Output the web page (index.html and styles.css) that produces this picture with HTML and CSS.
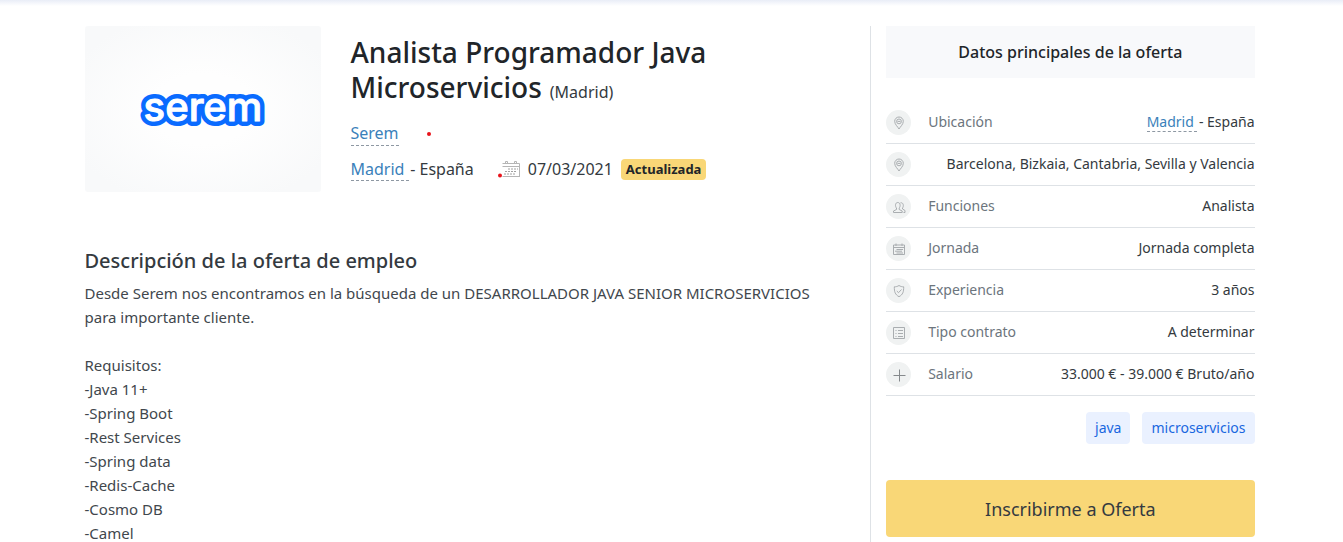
FILE: index.html
```html
<!DOCTYPE html>
<html lang="es">
<head>
<meta charset="utf-8">
<meta name="viewport" content="width=device-width, initial-scale=1">
<title>Analista Programador Java Microservicios</title>
<link rel="stylesheet" href="styles.css">
</head>
<body>
<svg class="defs" aria-hidden="true">
  <symbol id="pin" viewBox="0 0 14 14"><path d="M7 13C6 11 2.700 8.500 2.700 5.300a4.300 4.300 0 0 1 8.600 0C11.300 8.500 8 11 7 13z"/><circle cx="7" cy="5.400" r="2.400"/><path d="M5.500 5.400h3"/></symbol>
  <symbol id="users" viewBox="0 0 14 14"><path d="M1.500 12.500v-1.500l3-1.500V8C3 6.500 3 2.500 5.800 2.500S8.600 6.500 7.200 8v1.500l3 1.500v1.500z"/><path d="M8.500 2.800c3-.6 3.500 3.500 2 5.200v1l2.500 1.500v2h-1.500"/></symbol>
  <symbol id="calendar" viewBox="0 0 14 14"><path d="M1.500 3h11v9.500h-11zM1.500 5.500h11M4 1.500v2.500M10 1.500v2.500M4.500 7.500H11M3 9.200h7M4.500 11H11"/></symbol>
  <symbol id="shield" viewBox="0 0 14 14"><path d="M7 1.500c1.500 1 3 1.300 4.700 1.300 0 5-.7 7.700-4.700 9.900-4-2.200-4.700-4.900-4.700-9.900C4 2.800 5.500 2.500 7 1.500zM4.800 7l1.700 1.700L9.500 5.500"/></symbol>
  <symbol id="list" viewBox="0 0 14 14"><path d="M1.500 1.500h11v11h-11zM3.500 4.500h1M6 4.500h5M3.500 7.500h1M6 7.500h5M3.500 10.500h1M6 10.500h5"/></symbol>
  <symbol id="plus" viewBox="0 0 14 14"><path d="M7.500 1.500v12M1.500 7.500h12"/></symbol>
</svg>
<main class="container">
  <article class="offer">
    <header class="offer-head">
      <div class="logo-box">
        <svg class="logo" viewBox="0 0 130 40" role="img" aria-label="serem">
          <text class="logo-text" x="65" y="32">serem</text>
          <text class="logo-text logo-fill" x="65" y="32" aria-hidden="true">serem</text>
        </svg>
      </div>
      <div class="offer-info">
        <h1 class="title"><span>Analista Programador Java</span> <span>Microservicios</span><small class="title-city">(Madrid)</small></h1>
        <p class="company"><a class="link" href="#serem">Serem</a><span class="dot"></span></p>
        <p class="meta">
          <span><a class="link" href="#madrid">Madrid&nbsp;</a>&#8202;- España</span>
          <svg class="date-icon" viewBox="0 0 22 18" aria-hidden="true">
            <path class="date-frame" d="M4.500 3.500h17v13h-17M4.500 6.500h17M7.500 3.500V1.500h2v2M16.500 3.500V1.500h2v2M21.500 4v13"/>
            <path class="date-days" d="M10 9h10M7 11.500h12M6 14h11"/>
            <circle class="date-dot" cx="2" cy="15.500" r="2"/>
          </svg>
          <time datetime="2021-03-07">07/03/2021</time>
          <span class="badge">Actualizada</span>
        </p>
      </div>
    </header>
    <section>
      <h2 class="subtitle">Descripción de la oferta de empleo</h2>
      <p class="description">Desde Serem nos encontramos en la búsqueda de un DESARROLLADOR JAVA SENIOR MICROSERVICIOS para importante cliente.<br><br>Requisitos:<br>-Java 11+<br>-Spring Boot<br>-Rest Services<br>-Spring data<br>-Redis-Cache<br>-Cosmo DB<br>-Camel</p>
    </section>
  </article>
  <aside class="side">
    <h2 class="side-title">Datos principales de la oferta</h2>
    <ul class="facts">
      <li class="fact"><span class="fact-icon"><svg class="icon"><use href="#pin"/></svg></span><span class="fact-name">Ubicación</span><span class="fact-value"><a class="link" href="#madrid">Madrid&nbsp;</a>&#8202;- España</span></li>
      <li class="fact"><span class="fact-icon"><svg class="icon"><use href="#pin"/></svg></span><span class="fact-value">Barcelona, Bizkaia, Cantabria, Sevilla y Valencia</span></li>
      <li class="fact"><span class="fact-icon"><svg class="icon"><use href="#users"/></svg></span><span class="fact-name">Funciones</span><span class="fact-value">Analista</span></li>
      <li class="fact"><span class="fact-icon"><svg class="icon"><use href="#calendar"/></svg></span><span class="fact-name">Jornada</span><span class="fact-value">Jornada completa</span></li>
      <li class="fact"><span class="fact-icon"><svg class="icon"><use href="#shield"/></svg></span><span class="fact-name">Experiencia</span><span class="fact-value">3 años</span></li>
      <li class="fact"><span class="fact-icon"><svg class="icon"><use href="#list"/></svg></span><span class="fact-name">Tipo contrato</span><span class="fact-value">A determinar</span></li>
      <li class="fact"><span class="fact-icon"><svg class="icon icon-strong"><use href="#plus"/></svg></span><span class="fact-name">Salario</span><span class="fact-value">33.000 € - 39.000 € Bruto/año</span></li>
    </ul>
    <div class="tags"><a class="tag" href="#java">java</a><a class="tag" href="#microservicios">microservicios</a></div>
    <button class="apply" type="button">Inscribirme a Oferta</button>
  </aside>
</main>
</body>
</html>
```
FILE: styles.css
```css
* { box-sizing: border-box; }
body {
  margin: 0;
  overflow: hidden;
  font-family: "Segoe UI", "Noto Sans", sans-serif;
  font-size: 15px;
  line-height: 24px;
  color: #343a40;
  background: linear-gradient(#e9edf7, #fff 6px) no-repeat #fff;
}
h1, h2, p, ul { margin: 0; padding: 0; }
.defs { display: none; }
.container {
  display: grid;
  grid-template-columns: 2fr 1fr;
  max-width: 1200px;
  margin: 0 auto;
  padding: 26px 2px 0 0;
}
.offer { padding: 0 15px 0 13px; }
.offer-head { display: grid; grid-template-columns: 236px 1fr; gap: 30px; margin-bottom: 57px; }
.logo-box { display: flex; align-items: center; justify-content: center; height: 166px; border-radius: 3px; background: radial-gradient(#fefefe 30%, #f8f9fa 85%); }
.logo { width: 130px; height: 40px; overflow: visible; }
.logo-text { font: 500 40px Inter, sans-serif; text-anchor: middle; fill: #0a6bff; stroke: #0a6bff; stroke-width: 10px; stroke-linejoin: round; }
.logo-fill { fill: #fff; stroke: #fff; stroke-width: 1px; }
.offer-info { padding-top: 9px; }
.title { max-width: 400px; font-size: 28px; font-weight: 500; line-height: 35px; color: #212529; }
.title-city { margin-left: 8px; font-size: 16px; font-weight: 400; line-height: 24px; color: #343a40; }
.link { color: #3a81ba; text-decoration: none; border-bottom: 1px dashed #8e98a3; }
.company { display: flex; align-items: center; gap: 28px; margin-top: 16px; font-size: 16px; }
.dot { width: 4px; height: 4px; border-radius: 50%; background: #e8131b; }
.meta { display: flex; align-items: center; margin-top: 11px; font-size: 16px; }
.date-icon { width: 22px; height: 18px; margin: 0 8px 0 24px; }
.date-frame { fill: none; stroke: #b5b5b5; }
.date-days { fill: none; stroke: #a0a0a0; stroke-dasharray: 2 1; }
.date-dot { fill: #e8131b; }
.badge { margin-left: 8px; padding: 0 5px; border-radius: 4px; background: #f9d777; color: #212529; font-size: 13px; font-weight: 700; line-height: 21px; }
.subtitle { margin-bottom: 8px; font-size: 20px; font-weight: 500; line-height: 24px; }
.description { padding-right: 30px; color: #41474d; }
.side { padding: 0 15px; border-left: 1px solid #dee2e6; }
.side-title { padding: 14px 0; background: #f8f9fb; font-size: 16px; font-weight: 500; line-height: 24px; text-align: center; color: #212529; }
.facts { margin-top: 24px; list-style: none; font-size: 14px; }
.fact { display: flex; align-items: center; height: 42px; border-bottom: 1px solid #dee2e6; }
.fact-icon { display: flex; align-items: center; justify-content: center; width: 25px; height: 25px; margin-right: 17px; border-radius: 50%; background: #f0f2f2; }
.icon { width: 14px; height: 14px; fill: none; stroke: #a9adb0; stroke-width: 1px; }
.icon-strong { stroke: #85898c; }
.fact-name { padding-bottom: 2px; color: #6c757d; }
.fact-value { margin-left: auto; padding-bottom: 2px; }
.tags { display: flex; justify-content: flex-end; gap: 12px; margin: 16px 0 36px; }
.tag { padding: 4px 9px; border-radius: 4px; background: #eaf1ff; color: #1967e0; text-decoration: none; font-size: 14px; }
.apply { display: block; width: 100%; padding: 15px 14px 13px; border: 0; border-radius: 4px; background: #f9d777; color: #343a40; font: 400 18px/29px "Segoe UI", "Noto Sans", sans-serif; }
```
